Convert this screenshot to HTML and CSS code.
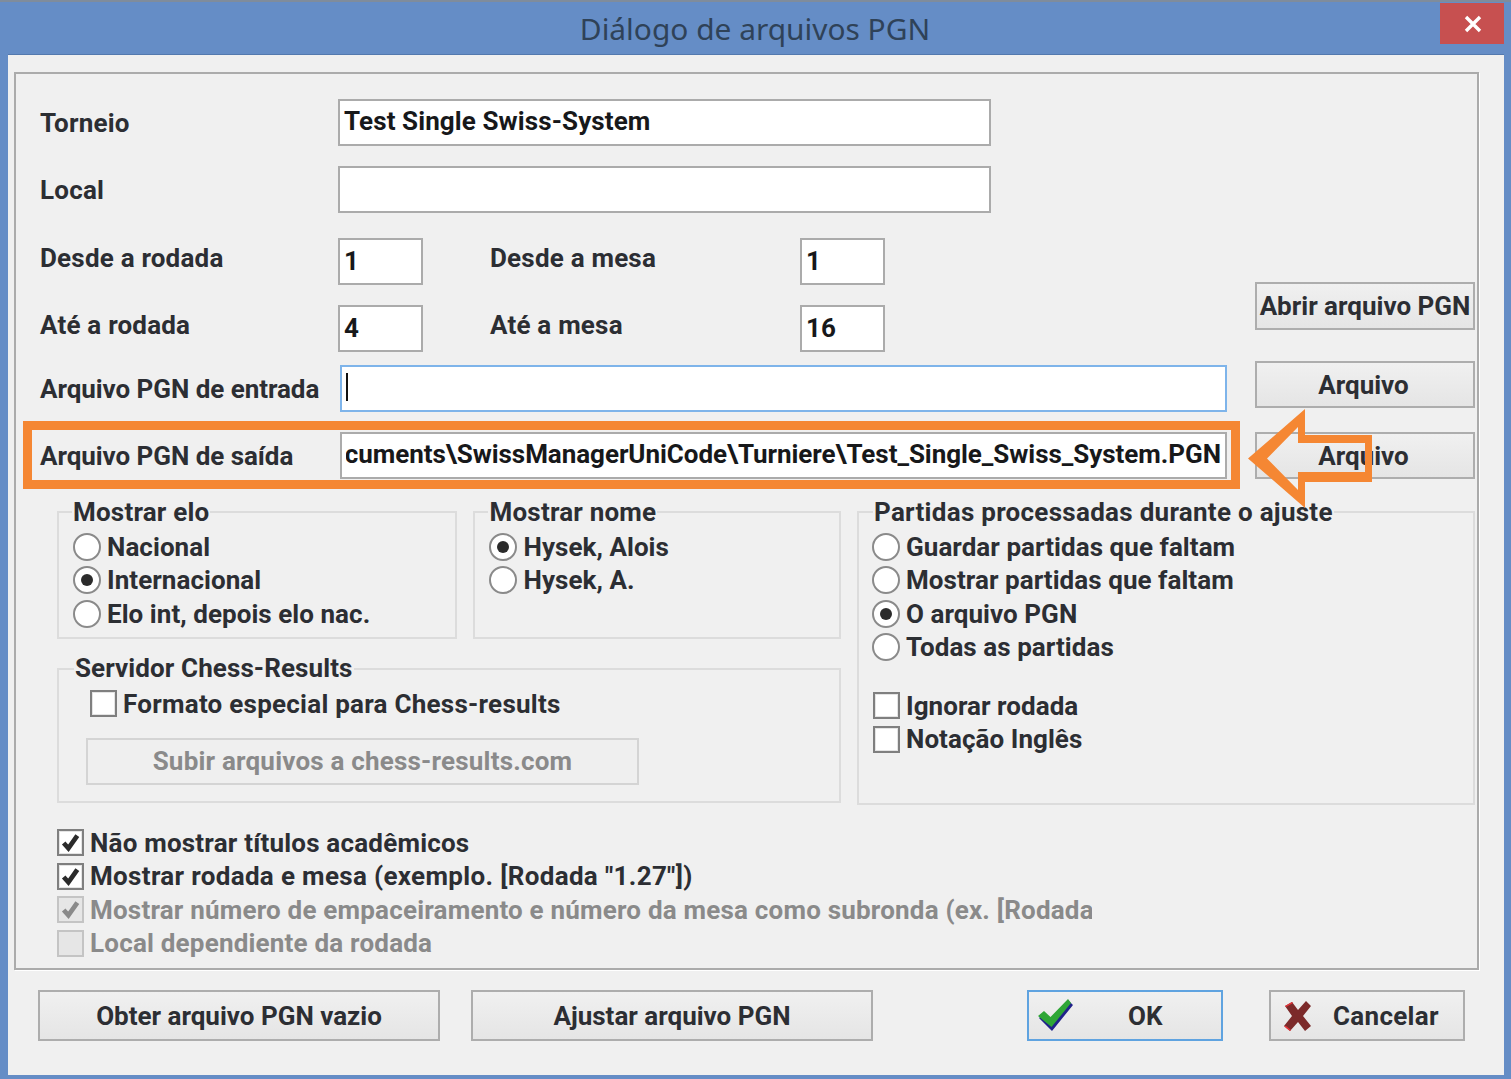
FILE: index.html
```html
<!DOCTYPE html>
<html lang="pt">
<head>
<meta charset="utf-8">
<title>Diálogo de arquivos PGN</title>
<link rel="stylesheet" href="styles.css">
</head>
<body>
<div class="window">
  <header class="titlebar">
    <h1 class="title">Diálogo de arquivos PGN</h1>
    <div class="close"><svg width="18" height="18" viewBox="0 0 18 18"><path d="M2 2 16 16M16 2 2 16" stroke="#fff" stroke-width="3.4" fill="none"/></svg></div>
  </header>
  <div class="client">
    <section class="panel">
      <div class="top">
        <div class="fields">
          <div class="row row-text row-first"><span class="label">Torneio</span><div class="field field-wide">Test Single Swiss-System</div></div>
          <div class="row row-text row-local"><span class="label">Local</span><div class="field field-wide"></div></div>
          <div class="row row-num row-from">
            <span class="label label-up">Desde a rodada</span><div class="field field-num">1</div>
            <span class="label label-up label-second">Desde a mesa</span><div class="field field-num">1</div>
          </div>
          <div class="row row-num row-to">
            <span class="label label-up">Até a rodada</span><div class="field field-num">4</div>
            <span class="label label-up label-second">Até a mesa</span><div class="field field-num">16</div>
          </div>
          <div class="row row-file row-in"><span class="label label-file">Arquivo PGN de entrada</span><div class="field field-file field-focus"><span class="caret"></span></div></div>
          <div class="row row-file row-out"><span class="label label-file">Arquivo PGN de saída</span><div class="field field-file"><div class="clip"><span class="path">Documents\SwissManagerUniCode\Turniere\Test_Single_Swiss_System.PGN</span></div></div></div>
        </div>
        <div class="side">
          <button class="btn btn-open" type="button">Abrir arquivo PGN</button>
          <button class="btn btn-file1" type="button">Arquivo</button>
          <button class="btn btn-file2" type="button">Arquivo</button>
        </div>
      </div>

      <div class="groups">
        <div class="groups-left">
          <div class="groups-pair">
            <div class="group group-elo">
              <div class="legend">Mostrar elo</div>
              <div class="opt opt-radio"><span class="radio"></span>Nacional</div>
              <div class="opt opt-radio"><span class="radio on"></span>Internacional</div>
              <div class="opt opt-radio"><span class="radio"></span>Elo int, depois elo nac.</div>
            </div>
            <div class="group group-name">
              <div class="legend">Mostrar nome</div>
              <div class="opt opt-radio"><span class="radio on"></span>Hysek, Alois</div>
              <div class="opt opt-radio"><span class="radio"></span>Hysek, A.</div>
            </div>
          </div>
          <div class="group group-server">
            <div class="legend legend-server">Servidor Chess-Results</div>
            <div class="opt opt-server"><span class="check"></span>Formato especial para Chess-results</div>
            <button class="btn btn-upload" type="button" disabled>Subir arquivos a chess-results.com</button>
          </div>
        </div>
        <div class="group group-games">
          <div class="legend legend-games">Partidas processadas durante o ajuste</div>
          <div class="opt opt-radio"><span class="radio"></span>Guardar partidas que faltam</div>
          <div class="opt opt-radio"><span class="radio"></span>Mostrar partidas que faltam</div>
          <div class="opt opt-radio"><span class="radio on"></span>O arquivo PGN</div>
          <div class="opt opt-radio"><span class="radio"></span>Todas as partidas</div>
          <div class="opt opt-radio opt-gap"><span class="check"></span>Ignorar rodada</div>
          <div class="opt opt-radio"><span class="check"></span>Notação Inglês</div>
        </div>
      </div>

      <div class="checks">
        <div class="opt"><span class="check"><svg class="tick" viewBox="0 0 20 20"><path d="M3.500 10.500 8 15.500 16.500 3.500" fill="none" stroke="#2b2b2b" stroke-width="4.500"/></svg></span>Não mostrar títulos acadêmicos</div>
        <div class="opt opt-wide"><span class="check"><svg class="tick" viewBox="0 0 20 20"><path d="M3.500 10.500 8 15.500 16.500 3.500" fill="none" stroke="#2b2b2b" stroke-width="4.500"/></svg></span>Mostrar rodada e mesa (exemplo. [Rodada "1.27"])</div>
        <div class="opt opt-off opt-clip"><span class="check check-off"><svg class="tick" viewBox="0 0 20 20"><path d="M3.500 10.500 8 15.500 16.500 3.500" fill="none" stroke="#8a8a8a" stroke-width="4.500"/></svg></span><span class="clip-text">Mostrar número de empaceiramento e número da mesa como subronda (ex. [Rodada</span></div>
        <div class="opt opt-off"><span class="check check-off"></span>Local dependiente da rodada</div>
      </div>
    </section>

    <footer class="footer">
      <button class="btn btn-foot btn-empty" type="button">Obter arquivo PGN vazio</button>
      <button class="btn btn-foot btn-adjust" type="button">Ajustar arquivo PGN</button>
      <button class="btn btn-foot btn-ok" type="button">
        <svg class="ok-icon" width="38" height="34" viewBox="0 0 38 34"><path d="M2 19 8 14 14 20 31 1 36 6 15 32Z" fill="#20228a"/><path d="M1 17 7 12 13.500 18 31 0 34 4 14.500 28Z" fill="#2ea636"/></svg>
        <span>OK</span>
      </button>
      <button class="btn btn-foot btn-cancel" type="button">
        <svg class="x-icon" width="30" height="32" viewBox="0 0 30 32"><path d="M2 6 9 2 15 10 23 1 28 6 20 16 28 26 22 31 15 22 7 31 1 26 9 16Z" fill="#7c2a2a"/><path d="M2 6 9 2 10 3 3 7ZM1 26 3 28 7 31 8 30 3 26Z" fill="#e8343a"/></svg>
        <span>Cancelar</span>
      </button>
    </footer>
  </div>

  <div class="highlight"></div>
  <svg class="arrow" width="126" height="101" viewBox="1248 408 126 101"><path fill="#f58733" fill-rule="evenodd" d="M1248 458.500 1305 409V435H1372V482H1305V508ZM1267 458.500 1298 490V472H1365V443H1298V427Z"/></svg>
</div>
</body>
</html>
```
FILE: styles.css
```css
* { box-sizing: border-box; }
html, body { margin: 0; padding: 0; }
body {
  width: 1511px;
  height: 1079px;
  overflow: hidden;
  font-family: Roboto, "Liberation Sans", Arial, sans-serif;
  font-weight: 700;
  font-size: 26px;
  letter-spacing: 0.2px;
  color: #2c2e33;
}
.window {
  position: relative;
  width: 1511px;
  height: 1079px;
  background: #658dc6;
  border-top: 2px solid #7f8c9c;
  display: flex;
  flex-direction: column;
}
.titlebar {
  height: 52px;
  flex: none;
  display: flex;
  align-items: center;
  justify-content: center;
  position: relative;
}
.title {
  margin: 0 0 0 -1px;
  font-family: "Noto Sans", sans-serif;
  font-weight: 400;
  font-size: 29.9px;
  letter-spacing: 0;
  color: #2f4258;
}
.close {
  position: absolute;
  top: 1px;
  left: 1440px;
  width: 64px;
  height: 41px;
  padding: 1px 0 0 2px;
  background: #c75050;
  display: flex;
  align-items: center;
  justify-content: center;
}
.client {
  margin: 0 7px 0 8px;
  height: 1021px;
  flex: none;
  background: #f0f0f0;
  padding: 17px 25px 0 6px;
  border-top: 1px solid #5379ae;
}
.panel {
  height: 898px;
  border: 2px solid #ababab;
  box-shadow: 1px 1px 0 #fff;
  padding: 25px 2px 0 24px;
}
.top { display: flex; }
.fields { width: 1189px; flex: none; }
.row { display: flex; align-items: center; }
.row-text { height: 47px; }
.row-local { margin-top: 20px; }
.row-num { height: 47px; }
.row-from { margin-top: 25px; }
.row-to { margin-top: 20px; }
.row-file { height: 47px; }
.row-in { margin-top: 13px; }
.row-out { margin-top: 20px; }
.label { width: 298px; flex: none; }
.label-file { width: 300px; letter-spacing: -0.05px; }
.label-up { padding-bottom: 8px; }
.label-second { width: 310px; margin-left: 67px; }
.field {
  height: 100%;
  background: #fff;
  border: 2px solid #ababab;
  display: flex;
  align-items: center;
  padding: 0 5px 4px 4px;
  color: #17181a;
  white-space: nowrap;
}
.field-wide { width: 653px; letter-spacing: 0.1px; }
.field-num { width: 85px; padding-bottom: 2px; }
.field-file { width: 887px; padding: 0 4px 4px 4px; letter-spacing: -0.05px; }
.field-focus { border-color: #7eb4ea; }
.caret { width: 2px; height: 28px; background: #111; }
.clip { width: 100%; overflow: hidden; display: flex; justify-content: flex-end; }
.path { flex: none; }
.side {
  width: 220px;
  flex: none;
  margin-left: 26px;
  padding-top: 183px;
  display: flex;
  flex-direction: column;
}
.btn {
  font: inherit;
  letter-spacing: 0;
  color: #2c2e33;
  background: linear-gradient(#f0f0f0, #e5e5e5);
  border: 2px solid #adadad;
  padding: 0;
  white-space: nowrap;
}
.btn-open { height: 48px; }
.btn-file1 { height: 47px; margin-top: 31px; padding-right: 3px; }
.btn-file2 { height: 47px; margin-top: 24px; padding: 0 3px 0 0; }
.groups {
  display: flex;
  margin-top: 32px;
  margin-left: 17px;
  gap: 16px;
}
.groups-left { width: 784px; flex: none; }
.groups-pair { display: flex; gap: 16px; }
.group {
  border: 2px solid #dcdcdc;
  padding: 0 0 0 15px;
}
.legend {
  width: fit-content;
  margin: -15px 0 4px -2px;
  height: 28px;
  line-height: 28px;
  background: #f0f0f0;
  padding: 0 1px;
}
.group-elo { width: 401px; height: 128px; }
.group-name { width: 368px; height: 128px; }
.group-server {
  margin-top: 29px;
  height: 135px;
  padding-left: 15px;
}
.legend-server { margin: -16px 0 5px 0; letter-spacing: 0.1px; }
.group-games { width: 618px; height: 294px; padding-left: 14px; }
.legend-games { margin-left: 0; letter-spacing: 0.28px; }
.opt {
  display: flex;
  align-items: center;
  height: 33.5px;
  white-space: nowrap;
}
.opt-radio { letter-spacing: 0.05px; }
.opt-wide { letter-spacing: 0.33px; }
.opt-gap { margin-top: 25px; }
.radio {
  width: 28px;
  height: 28px;
  flex: none;
  margin: 0 6px 0 -1px;
  border-radius: 50%;
  border: 2px solid #8a8a8a;
  background: #fff;
  position: relative;
}
.radio.on::after {
  content: "";
  position: absolute;
  left: 6px;
  top: 6px;
  width: 12px;
  height: 12px;
  border-radius: 50%;
  background: #2b2b2b;
}
.check {
  width: 27px;
  height: 27px;
  flex: none;
  margin-right: 6px;
  border: 2px solid #7f7f7f;
  box-shadow: inset 0 0 0 1px #e4e4e4;
  background: #fff;
  display: flex;
  align-items: center;
  justify-content: center;
}
.check-off { border-color: #c4c4c4; background: #e6e6e6; box-shadow: none; }
.tick { width: 21px; height: 21px; }
.opt-server { margin-left: 16px; letter-spacing: 0.25px; }
.btn-upload {
  display: block;
  width: 553px;
  height: 47px;
  margin: 17px 0 0 12px;
  border-color: #d4d4d4;
  background: #efefef;
  color: #8a8a8a;
  letter-spacing: 0.2px;
}
.checks { margin-top: 21px; margin-left: 17px; }
.opt-off { color: #8a8a8a; }
.opt-clip { width: 1035px; overflow: hidden; }
.clip-text { flex: none; }
.footer {
  display: flex;
  margin-top: 20px;
  padding-left: 24px;
}
.btn-foot {
  height: 51px;
  flex: none;
  width: 402px;
}
.btn-adjust { margin-left: 31px; }
.btn-ok {
  width: 196px;
  margin-left: 154px;
  border-color: #5fa3e0;
  display: flex;
  align-items: center;
  padding: 0 0 0 8px;
}
.btn-ok span { margin-left: 53px; }
.btn-cancel {
  width: 196px;
  margin-left: 46px;
  display: flex;
  align-items: center;
  padding: 0 0 0 12px;
}
.btn-cancel span { margin-left: 20px; letter-spacing: 0.3px; }
.highlight {
  position: absolute;
  left: 23px;
  top: 419px;
  width: 1217px;
  height: 68px;
  border: 9px solid #f58733;
}
.arrow {
  position: absolute;
  left: 1248px;
  top: 406px;
}
```
